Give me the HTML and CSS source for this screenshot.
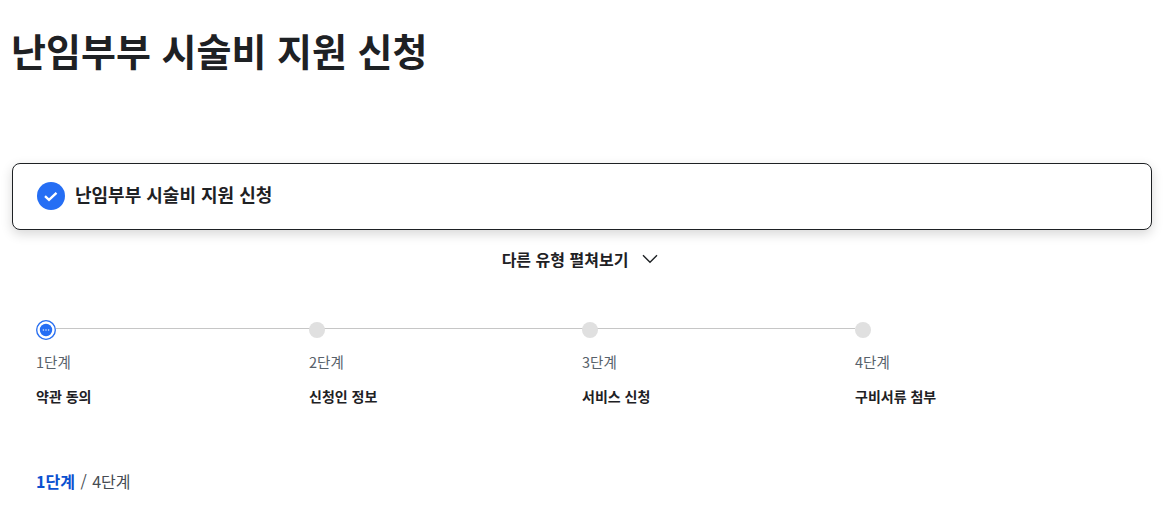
FILE: index.html
```html
<!DOCTYPE html>
<html lang="ko">
<head>
  <meta charset="UTF-8" />
  <meta name="viewport" content="width=device-width, initial-scale=1.0"/>
  <title>난임부부 시술비 지원 신청</title>
  <link rel="stylesheet" href="styles.css">
</head>
<body>
  <h1 class="page-title">난임부부 시술비 지원 신청</h1>

  <div class="type-card">
    <svg class="check-icon" width="28" height="28" viewBox="0 0 28 28">
      <circle cx="14" cy="14" r="14" fill="#256ef4"/>
      <path d="M8 14.2l4 3.6 7.5-7" fill="none" stroke="#fff" stroke-width="2.4"/>
    </svg>
    <span class="type-name">난임부부 시술비 지원 신청</span>
  </div>

  <div class="more-types">
    <span>다른 유형 펼쳐보기</span>
    <svg width="16" height="10" viewBox="0 0 16 10">
      <path d="M1 1.2l7 7 7-7" fill="none" stroke="#1e2124" stroke-width="1.4"/>
    </svg>
  </div>

  <ol class="steps">
    <li class="step current">
      <div class="step-track">
        <span class="dot">
          <svg width="20" height="20" viewBox="0 0 20 20">
            <circle cx="10" cy="10" r="9.3" fill="#fff" stroke="#256ef4" stroke-width="1.3"/>
            <circle cx="10" cy="10" r="6.2" fill="#256ef4"/>
            <circle cx="7.4" cy="10" r="0.8" fill="#dbe6fb"/>
            <circle cx="10" cy="10" r="0.8" fill="#dbe6fb"/>
            <circle cx="12.6" cy="10" r="0.8" fill="#dbe6fb"/>
          </svg>
        </span>
      </div>
      <div class="step-no">1단계</div>
      <div class="step-name">약관 동의</div>
    </li>
    <li class="step">
      <div class="step-track"><span class="dot"></span></div>
      <div class="step-no">2단계</div>
      <div class="step-name">신청인 정보</div>
    </li>
    <li class="step">
      <div class="step-track"><span class="dot"></span></div>
      <div class="step-no">3단계</div>
      <div class="step-name">서비스 신청</div>
    </li>
    <li class="step last">
      <div class="step-track"><span class="dot"></span></div>
      <div class="step-no">4단계</div>
      <div class="step-name">구비서류 첨부</div>
    </li>
  </ol>

  <p class="step-count"><strong>1단계</strong><span class="sep">/</span>4단계</p>
</body>
</html>
```

FILE: styles.css
```css
* {
  margin: 0;
  padding: 0;
  box-sizing: border-box;
  font-family: "Noto Sans CJK KR", "Noto Sans", sans-serif;
}

body {
  background: #fff;
  color: #1e2124;
  padding: 0 15px 0 12px;
}

.page-title {
  font-size: 38px;
  line-height: 48px;
  padding-top: 26px;
  font-weight: 700;
  margin-left: -1px;
}

.type-card {
  display: flex;
  align-items: center;
  gap: 10px;
  height: 67px;
  margin-top: 89px;
  padding: 0 0 2px 24px;
  background: #fff;
  border: 1px solid #1e2124;
  border-radius: 8px;
  box-shadow: 0 4px 12px rgba(0, 0, 0, 0.16);
}

.type-name {
  font-size: 18px;
  font-weight: 700;
  margin-bottom: 3px;
}

.more-types {
  display: flex;
  align-items: center;
  justify-content: center;
  gap: 14px;
  margin-top: 17px;
  padding-right: 4px;
  height: 24px;
  font-size: 16px;
  font-weight: 700;
}

.steps {
  list-style: none;
  display: flex;
  margin-top: 49px;
  padding-left: 24px;
}

.step {
  width: 273px;
}

.step-track {
  height: 20px;
  display: flex;
  align-items: center;
  background: linear-gradient(#c6c6c6, #c6c6c6) no-repeat 0 8px / 100% 1px;
}

.step.last .step-track {
  background: none;
}

.dot {
  display: block;
  width: 16px;
  height: 16px;
  border-radius: 50%;
  background: #e0e0e0;
}

.current .dot {
  width: 20px;
  height: 20px;
}

.step-no {
  margin-top: 12px;
  font-size: 14.5px;
  line-height: 20px;
  color: #58616a;
}

.step-name {
  margin-top: 14px;
  font-size: 14px;
  line-height: 20px;
  font-weight: 700;
}

.step-count {
  margin-top: 63px;
  margin-left: 24px;
  font-size: 16px;
  line-height: 24px;
  color: #464c53;
}

.step-count strong {
  color: #0b50d0;
}

.sep {
  margin: 0 5.5px;
}
```
